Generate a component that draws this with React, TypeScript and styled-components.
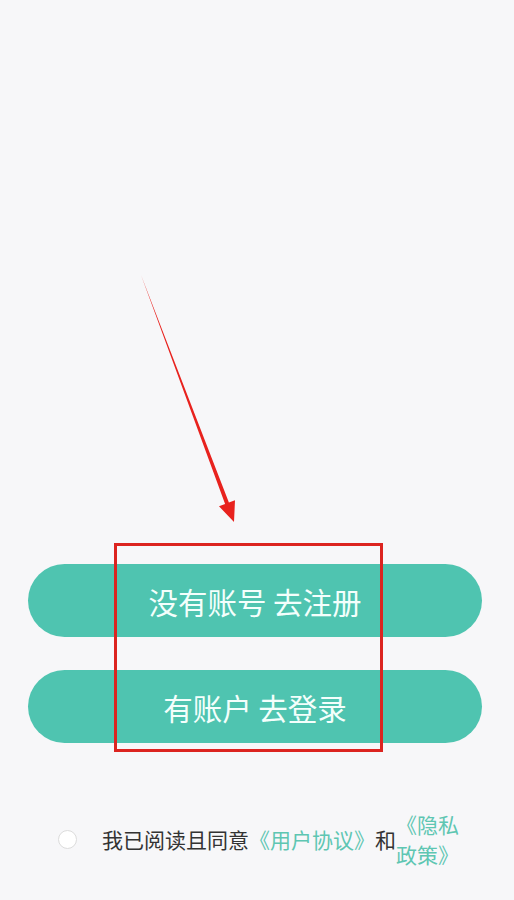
import { FC } from 'react'
import styled, { createGlobalStyle } from 'styled-components'

const GlobalStyle = createGlobalStyle`
  html, body {
    margin: 0;
    padding: 0;
    background: #f7f7f9;
  }
  body {
    font-family: "Noto Sans CJK SC", "Noto Sans", sans-serif;
  }
`

const Page = styled.div`
  position: relative;
  width: 514px;
  min-height: 900px;
  display: flex;
  flex-direction: column;
  padding-top: 564px;
  box-sizing: border-box;
  background: #f7f7f9;
  overflow: hidden;
`

const ButtonGroup = styled.div`
  display: flex;
  flex-direction: column;
  gap: 33px;
  padding: 0 32px 0 28px;
`

const PillButton = styled.button`
  height: 73px;
  border: none;
  border-radius: 37px;
  background: #4fc4b0;
  color: #f4fffc;
  font-family: "Noto Sans CJK SC", sans-serif;
  font-size: 29.5px;
  display: flex;
  align-items: center;
  justify-content: center;
  padding: 0;
  cursor: pointer;
`

const Agreement = styled.div`
  display: flex;
  align-items: center;
  margin-top: 66px;
  padding: 0 50px 0 58px;
  font-size: 21px;
  line-height: 30px;
  color: #333;
`

const Radio = styled.span`
  flex: none;
  width: 17px;
  height: 17px;
  border: 1.5px solid #dcdcdc;
  border-radius: 50%;
  background: #fff;
  margin-right: 25px;
`

const Text = styled.span`
  white-space: nowrap;
`

const Link = styled.span`
  color: #5ec6b2;
`

const WrapLink = styled(Link)`
  flex: 1;
  min-width: 0;
`

const Highlight = styled.div`
  position: absolute;
  left: 114px;
  top: 543px;
  width: 269px;
  height: 209px;
  box-sizing: border-box;
  border: 3px solid #dc2420;
  pointer-events: none;
`

const Arrow = styled.svg`
  position: absolute;
  left: 130px;
  top: 265px;
  width: 120px;
  height: 270px;
  pointer-events: none;
`

const App: FC = () => {
  return (
    <>
      <GlobalStyle />
      <Page>
        <ButtonGroup>
          <PillButton>没有账号 去注册</PillButton>
          <PillButton>有账户 去登录</PillButton>
        </ButtonGroup>

        <Agreement>
          <Radio />
          <Text>
            我已阅读且同意<Link>《用户协议》</Link>和
          </Text>
          <WrapLink>《隐私政策》</WrapLink>
        </Agreement>

        <Highlight />
        <Arrow viewBox="130 265 120 270">
          <polygon
            points="141,275 228.9,502.6 235,500.3 234,522 219,506.3 225.1,504"
            fill="#e8221e"
          />
        </Arrow>
      </Page>
    </>
  )
}

export default App
